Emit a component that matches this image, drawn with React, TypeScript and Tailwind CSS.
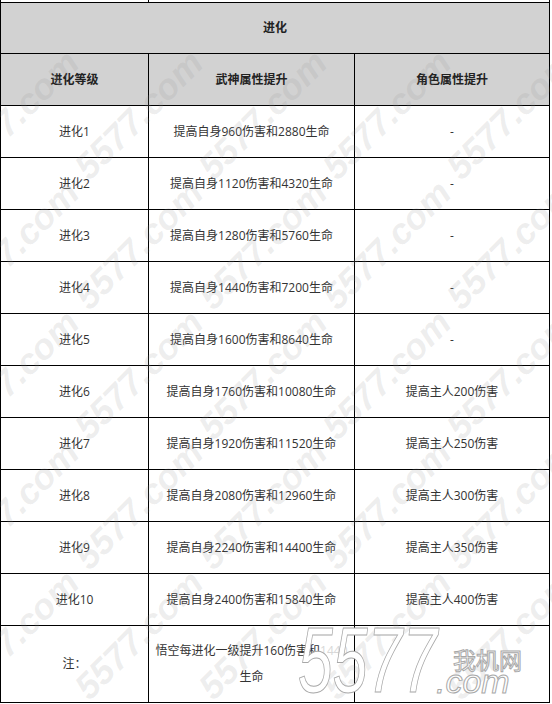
import React from 'react';

const rows = [
  ['进化1', '提高自身960伤害和2880生命', '-'],
  ['进化2', '提高自身1120伤害和4320生命', '-'],
  ['进化3', '提高自身1280伤害和5760生命', '-'],
  ['进化4', '提高自身1440伤害和7200生命', '-'],
  ['进化5', '提高自身1600伤害和8640生命', '-'],
  ['进化6', '提高自身1760伤害和10080生命', '提高主人200伤害'],
  ['进化7', '提高自身1920伤害和11520生命', '提高主人250伤害'],
  ['进化8', '提高自身2080伤害和12960生命', '提高主人300伤害'],
  ['进化9', '提高自身2240伤害和14400生命', '提高主人350伤害'],
  ['进化10', '提高自身2400伤害和15840生命', '提高主人400伤害'],
];

// watermark grid (centers of each "5577.com" mark)
const marks: { x: number; y: number }[] = [];
for (let i = 0; i < 5; i++) {
  for (let j = 0; j < 6; j++) {
    marks.push({ x: 15 + 124 * i, y: 115 + 130 * j });
  }
}

const cell = 'flex items-center justify-center border-r border-b border-black text-center';
const outline = 'text-white [-webkit-text-stroke:1px_#a8a8a8]';

export default function App() {
  return (
    <div className="relative w-[552px] h-[704px] overflow-hidden bg-white text-[12px] text-[#333] font-['Open_Sans','Noto_Sans_CJK_SC',sans-serif]">
      {/* tail of the previous table row */}
      <div className="flex h-[2px] w-[550px] border-l border-r border-black">
        <div className="w-[148px] border-r border-black" />
      </div>

      <div className="grid w-[550px] grid-cols-[148px_206px_195px] border-l border-t border-black">
        <div className={`${cell} col-span-3 h-[51px] bg-[#d2d2d2] font-bold text-[#222]`}>进化</div>

        <div className={`${cell} h-[52px] bg-[#d2d2d2] font-bold text-[#222]`}>进化等级</div>
        <div className={`${cell} h-[52px] bg-[#d2d2d2] font-bold text-[#222]`}>武神属性提升</div>
        <div className={`${cell} h-[52px] bg-[#d2d2d2] font-bold text-[#222]`}>角色属性提升</div>

        {rows.map((r) => (
          <React.Fragment key={r[0]}>
            <div className={`${cell} h-[52px]`}>{r[0]}</div>
            <div className={`${cell} h-[52px]`}>{r[1]}</div>
            <div className={`${cell} h-[52px]`}>{r[2]}</div>
          </React.Fragment>
        ))}

        <div className={`${cell} h-[77px]`}>注：</div>
        <div className={`${cell} h-[77px] flex-col leading-[26px]`}>
          <span className="whitespace-nowrap">
            悟空每进化一级提升160伤害和<span className="text-[#d8d8d8]">1440</span>
          </span>
          <span>生命</span>
        </div>
        <div className={`${cell} h-[77px]`} />
      </div>

      {/* site watermark */}
      <div className="pointer-events-none absolute inset-0">
        {marks.map((m, k) => (
          <span
            key={k}
            className="absolute -translate-x-1/2 -translate-y-1/2 -rotate-45 whitespace-nowrap font-['Liberation_Sans',sans-serif] text-[36px] font-bold italic leading-none text-[rgba(150,150,150,0.16)]"
            style={{ left: m.x, top: m.y }}
          >
            5577.com
          </span>
        ))}
      </div>

      {/* corner logo */}
      <div className="pointer-events-none absolute left-[298px] top-[624px] h-[80px] w-[240px] font-['Liberation_Sans',sans-serif] italic leading-none">
        <div className={`absolute left-0 top-[-10px] origin-left scale-x-[0.68] text-[92px] ${outline}`}>5577</div>
        <div className={`absolute left-[155px] top-[24px] font-['Noto_Sans_CJK_SC',sans-serif] not-italic text-[23px] ${outline}`}>
          我机网
        </div>
        <div className={`absolute left-[138px] top-[40px] text-[34px] ${outline}`}>.com</div>
      </div>
    </div>
  );
}
